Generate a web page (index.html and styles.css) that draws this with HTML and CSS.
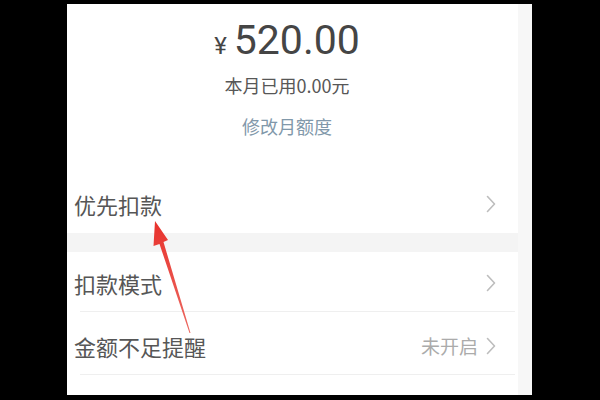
FILE: index.html
```html
<!DOCTYPE html>
<html lang="zh-CN">
<head>
<meta charset="utf-8">
<title>月额度</title>
<link rel="stylesheet" href="styles.css">
</head>
<body>
<div class="screen">
  <div class="main">
    <div class="summary">
      <div class="amount"><span class="yen">¥</span><span class="num">520.00</span></div>
      <div class="used">本月已用0.00元</div>
      <div class="edit">修改月额度</div>
    </div>
    <div class="row row-first">
      <span class="label">优先扣款</span>
      <span class="right"><svg class="chev" viewBox="0 0 10 18" width="10" height="18"><polyline points="1.5,1.5 8.5,9 1.5,16.5"/></svg></span>
    </div>
    <div class="band"></div>
    <div class="row row-mode">
      <span class="label">扣款模式</span>
      <span class="right"><svg class="chev" viewBox="0 0 10 18" width="10" height="18"><polyline points="1.5,1.5 8.5,9 1.5,16.5"/></svg></span>
    </div>
    <div class="row row-alert">
      <span class="label">金额不足提醒</span>
      <span class="right"><span class="status">未开启</span><svg class="chev" viewBox="0 0 10 18" width="10" height="18"><polyline points="1.5,1.5 8.5,9 1.5,16.5"/></svg></span>
    </div>
    <div class="rest"></div>
  </div>
  <div class="edge"></div>
</div>
<svg class="annot" viewBox="0 0 600 400" width="600" height="400">
  <defs>
    <linearGradient id="ar" x1="0" y1="0" x2="0" y2="1">
      <stop offset="0" stop-color="#e8322c"/>
      <stop offset="1" stop-color="#ec6a62"/>
    </linearGradient>
  </defs>
  <polygon fill="url(#ar)" points="155,221 168,240 163.5,242 190.5,333 189.5,333 159.5,244 153.5,246"/>
</svg>
</body>
</html>
```
FILE: styles.css
```css
html, body {
  margin: 0;
  padding: 0;
}
body {
  width: 600px;
  height: 400px;
  overflow: hidden;
  background: #000;
  position: relative;
  font-family: "Noto Sans CJK SC", "Noto Sans", sans-serif;
}
.screen {
  margin: 4px 0 0 67px;
  width: 465px;
  height: 391px;
  display: flex;
  background: #fff;
}
.main {
  flex: 1;
  display: flex;
  flex-direction: column;
}
.edge {
  width: 14px;
  background: #f7f7f7;
}
.summary {
  padding: 12px 11px 36px 0;
  display: flex;
  flex-direction: column;
  align-items: center;
}
.amount {
  font-family: Roboto, "Noto Sans", sans-serif;
  color: #454545;
  height: 48px;
  line-height: 48px;
  display: flex;
  align-items: baseline;
}
.yen {
  font-size: 24px;
  margin-right: 7px;
}
.num {
  font-size: 41px;
}
.used {
  margin-top: 9px;
  font-size: 18px;
  line-height: 24px;
  color: #575757;
}
.edit {
  margin-top: 17px;
  font-size: 18px;
  line-height: 24px;
  color: #8198aa;
}
.row {
  display: flex;
  align-items: center;
  justify-content: space-between;
  padding: 0 22px 0 7px;
  font-size: 22px;
  color: #565656;
}
.row-first {
  height: 59px;
}
.row-mode {
  height: 60px;
  padding-top: 2px;
  box-sizing: border-box;
  border-bottom: 1px solid #efefef;
  margin-left: 13px;
  margin-right: 3px;
  padding-left: 0;
  padding-right: 19px;
}
.row-mode .label {
  margin-left: -6px;
}
.row-alert {
  height: 63px;
  padding-top: 5px;
  box-sizing: border-box;
  border-bottom: 1px solid #efefef;
  margin-left: 13px;
  margin-right: 3px;
  padding-left: 0;
  padding-right: 19px;
}
.row-alert .label {
  margin-left: -6px;
}
.band {
  height: 19px;
  background: #f4f4f4;
}
.right {
  display: flex;
  align-items: center;
}
.status {
  font-size: 19px;
  color: #ababab;
  margin-right: 8px;
}
.chev {
  display: block;
}
.chev polyline {
  fill: none;
  stroke: #bdbdbd;
  stroke-width: 1.6;
  stroke-linecap: round;
  stroke-linejoin: round;
}
.rest {
  flex: 1;
}
.annot {
  position: absolute;
  left: 0;
  top: 0;
  pointer-events: none;
}
```
